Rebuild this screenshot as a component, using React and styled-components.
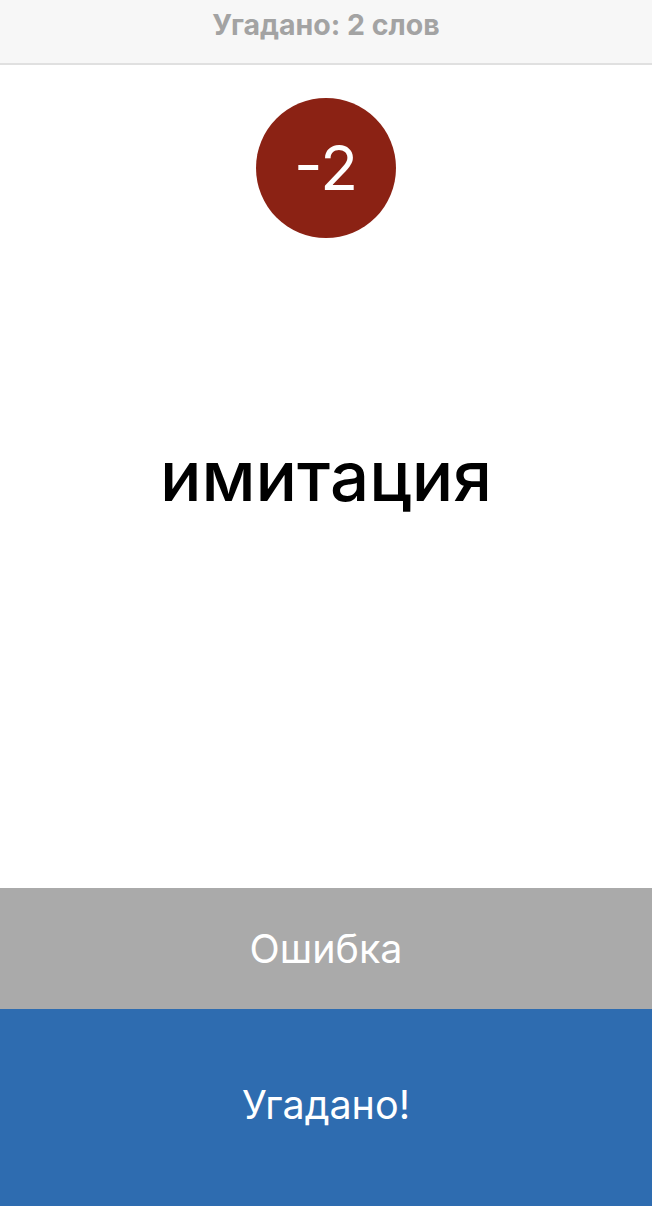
import React from "react";
import styled, { createGlobalStyle } from "styled-components";

const Global = createGlobalStyle`
  html, body { margin: 0; padding: 0; background: #fff; }
  body { font-family: Inter, "Noto Sans", sans-serif; }
`;

const Screen = styled.div`
  display: flex;
  flex-direction: column;
  width: 652px;
  height: 1206px;
  overflow: hidden;
`;

const Header = styled.header`
  flex: none;
  height: 65px;
  box-sizing: border-box;
  padding-bottom: 14px;
  background: #f7f7f7;
  border-bottom: 2px solid #e0e0e0;
  display: flex;
  align-items: center;
  justify-content: center;
  color: #a3a3a3;
  font-weight: 700;
  font-size: 28.5px;
`;

const Stage = styled.main`
  flex: 1;
  display: flex;
  flex-direction: column;
  align-items: center;
  padding-top: 33px;
`;

const Badge = styled.div`
  width: 140px;
  height: 140px;
  border-radius: 50%;
  background: #8b2214;
  color: #fff;
  display: flex;
  align-items: center;
  justify-content: center;
  font-size: 62px;
  font-weight: 400;
  padding-bottom: 2px;
  box-sizing: border-box;
`;

const Word = styled.div`
  margin-top: 196px;
  font-size: 69px;
  line-height: 84px;
  font-weight: 500;
  color: #000;
`;

const Action = styled.button`
  flex: none;
  height: ${(p) => p.$h}px;
  border: none;
  margin: 0;
  width: 100%;
  background: ${(p) => p.$bg};
  color: #fff;
  font-family: inherit;
  font-size: 39.5px;
  font-weight: 400;
  display: flex;
  align-items: center;
  justify-content: center;
  padding: 0 0 ${(p) => p.$pb || 0}px;
`;

export default function App() {
  return (
    <>
      <Global />
      <Screen>
        <Header>Угадано: 2 слов</Header>
        <Stage>
          <Badge>-2</Badge>
          <Word>имитация</Word>
        </Stage>
        <Action $bg="#aaaaaa" $h={121}>Ошибка</Action>
        <Action $bg="#2e6cb0" $h={197} $pb={6}>Угадано!</Action>
      </Screen>
    </>
  );
}
